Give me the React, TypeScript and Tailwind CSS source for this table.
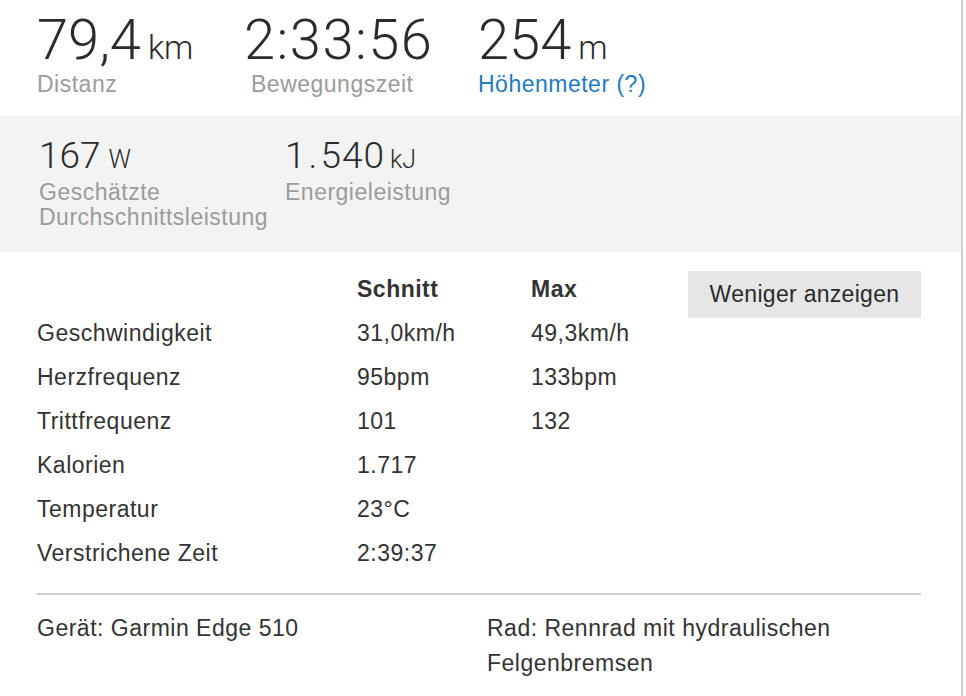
import React from 'react';

const body = { fontFamily: '"Liberation Sans", Arial, sans-serif' };
const light = { fontFamily: 'Roboto, "Liberation Sans", sans-serif' };

type Stat = { value: string; unit: string; label: string; link?: boolean; width: string; labelPad?: string; track?: string };

const topStats: Stat[] = [
  { value: '79,4', unit: 'km', label: 'Distanz', width: 'w-[207px]' },
  { value: '2:33:56', unit: '', label: 'Bewegungszeit', width: 'w-[234px]', labelPad: 'pl-[7px]', track: 'tracking-[1.5px]' },
  { value: '254', unit: 'm', label: 'Höhenmeter (?)', link: true, width: 'w-[200px]' },
];

const rows = [
  ['Geschwindigkeit', '31,0km/h', '49,3km/h'],
  ['Herzfrequenz', '95bpm', '133bpm'],
  ['Trittfrequenz', '101', '132'],
  ['Kalorien', '1.717', ''],
  ['Temperatur', '23°C', ''],
  ['Verstrichene Zeit', '2:39:37', ''],
];

function App() {
  return (
    <div className="min-h-[696px] w-[966px] bg-white" style={body}>
      <div className="min-h-[696px] w-[963px] border-r-2 border-[#cfcfcf] text-[#333] tracking-[0.5px]">
        {/* Top stats */}
        <div className="flex h-[115px] pl-[37px] pt-[12px]">
          {topStats.map((s) => (
            <div key={s.label} className={s.width}>
              <div className="flex h-[56px] items-baseline font-light tracking-normal" style={light}>
                <span className={`text-[56px] leading-[56px] text-[#2b2b2b] ${s.track ?? ''}`}>{s.value}</span>
                {s.unit && <span className="ml-[7px] text-[33px] text-[#2b2b2b]">{s.unit}</span>}
              </div>
              <div
                className={`mt-[2px] text-[23px] leading-[28px] ${s.labelPad ?? ''} ${
                  s.link ? 'text-[#1f7bbd]' : 'text-[#9b9b9b]'
                }`}
              >
                {s.label}
              </div>
            </div>
          ))}
        </div>

        {/* Power band */}
        <div className="flex h-[137px] w-[961px] bg-[#f3f3f3] pl-[39px] pt-[22px]">
          <div className="w-[246px]">
            <div className="flex h-[37px] items-baseline font-light tracking-normal" style={light}>
              <span className="text-[37px] leading-[37px] text-[#2b2b2b]">167</span>
              <span className="ml-[8px] text-[25px] text-[#2b2b2b]">W</span>
            </div>
            <div className="mt-[6px] text-[23px] leading-[25px] text-[#9b9b9b]">
              Geschätzte
              <br />
              Durchschnittsleistung
            </div>
          </div>
          <div>
            <div className="flex h-[37px] items-baseline font-light tracking-normal" style={light}>
              <span className="text-[37px] leading-[37px] tracking-[1px] text-[#2b2b2b]">
                1<span className="mx-[2px]">.</span>540
              </span>
              <span className="ml-[5px] text-[25px] text-[#2b2b2b]">kJ</span>
            </div>
            <div className="mt-[6px] text-[23px] leading-[25px] text-[#9b9b9b]">Energieleistung</div>
          </div>
        </div>

        {/* Details table */}
        <div className="pl-[37px] pr-[40px] pt-[15px] text-[23px]">
          <div className="flex h-[44px] items-start">
            <div className="w-[320px]" />
            <div className="w-[174px] pt-[8px] font-bold leading-[28px]">Schnitt</div>
            <div className="w-[157px] pt-[8px] font-bold leading-[28px]">Max</div>
            <button className="mt-[4px] h-[47px] w-[233px] shrink-0 bg-[#e6e6e6] text-[23px] tracking-[0.3px] text-[#2b2b2b]">
              Weniger anzeigen
            </button>
          </div>
          {rows.map(([label, avg, max]) => (
            <div key={label} className="flex h-[44px] items-center leading-[28px]">
              <div className="w-[320px]">{label}</div>
              <div className="w-[174px]">{avg}</div>
              <div className="w-[157px]">{max}</div>
            </div>
          ))}

          <div className="mt-[18px] h-[2px] w-[884px] bg-[#d0d0d0]" />

          <div className="mt-[16px] flex leading-[35px]">
            <div className="w-[450px]">Gerät: Garmin Edge 510</div>
            <div className="w-[420px]">
              Rad: Rennrad mit hydraulischen
              <br />
              Felgenbremsen
            </div>
          </div>
        </div>
      </div>
    </div>
  );
}

export default App;
